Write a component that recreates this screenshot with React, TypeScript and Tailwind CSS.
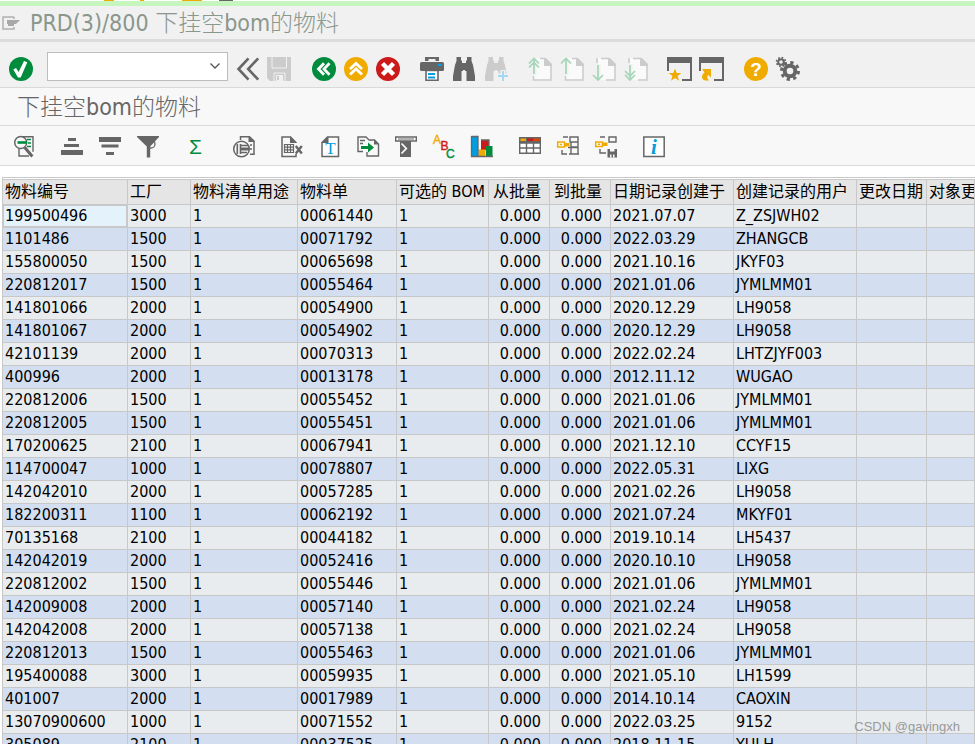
import type { ReactNode } from 'react';

type Row = [string, string, string, string, string];

// material, plant, BOM number, created on, created by
const rows: Row[] = [
    ['199500496', '3000', '00061440', '2021.07.07', 'Z_ZSJWH02'],
    ['1101486', '1500', '00071792', '2022.03.29', 'ZHANGCB'],
    ['155800050', '1500', '00065698', '2021.10.16', 'JKYF03'],
    ['220812017', '1500', '00055464', '2021.01.06', 'JYMLMM01'],
    ['141801066', '2000', '00054900', '2020.12.29', 'LH9058'],
    ['141801067', '2000', '00054902', '2020.12.29', 'LH9058'],
    ['42101139', '2000', '00070313', '2022.02.24', 'LHTZJYF003'],
    ['400996', '2000', '00013178', '2012.11.12', 'WUGAO'],
    ['220812006', '1500', '00055452', '2021.01.06', 'JYMLMM01'],
    ['220812005', '1500', '00055451', '2021.01.06', 'JYMLMM01'],
    ['170200625', '2100', '00067941', '2021.12.10', 'CCYF15'],
    ['114700047', '1000', '00078807', '2022.05.31', 'LIXG'],
    ['142042010', '2000', '00057285', '2021.02.26', 'LH9058'],
    ['182200311', '1100', '00062192', '2021.07.24', 'MKYF01'],
    ['70135168', '2100', '00044182', '2019.10.14', 'LH5437'],
    ['142042019', '2000', '00052416', '2020.10.10', 'LH9058'],
    ['220812002', '1500', '00055446', '2021.01.06', 'JYMLMM01'],
    ['142009008', '2000', '00057140', '2021.02.24', 'LH9058'],
    ['142042008', '2000', '00057138', '2021.02.24', 'LH9058'],
    ['220812013', '1500', '00055463', '2021.01.06', 'JYMLMM01'],
    ['195400088', '3000', '00059935', '2021.05.10', 'LH1599'],
    ['401007', '2000', '00017989', '2014.10.14', 'CAOXIN'],
    ['13070900600', '1000', '00071552', '2022.03.25', '9152'],
    ['305089', '2100', '00037525', '2018.11.15', 'YULH'],
];

const columns = [
    { label: '物料编号', width: 'w-[125px]' },
    { label: '工厂', width: 'w-[63px]' },
    { label: '物料清单用途', width: 'w-[107px]' },
    { label: '物料单', width: 'w-[99px]' },
    { label: '可选的 BOM', width: 'w-[92px]' },
    { label: '从批量', width: 'w-[61px]', numeric: true },
    { label: '到批量', width: 'w-[61px]', numeric: true },
    { label: '日期记录创建于', width: 'w-[123px]' },
    { label: '创建记录的用户', width: 'w-[123px]' },
    { label: '更改日期', width: 'w-[70px]' },
    { label: '对象更', width: '' },
];

const GRAY = '#666666';
const GREEN = '#008c3c';
const ORANGE = '#f0ab00';
const RED = '#cc1919';
const BLUE = '#009de0';
const PALE = '#cccccc';
const MINT = '#a5d6b8';

function Tool({ label, disabled, children }: { label: string; disabled?: boolean; children: ReactNode }) {
    return (
        <button type="button" aria-label={label} disabled={disabled} className="size-6 shrink-0">
            <svg viewBox="0 0 24 24" className="size-6 overflow-visible" fill="none">
                {children}
            </svg>
        </button>
    );
}

function Group({ children }: { children: ReactNode }) {
    return <div className="flex gap-2">{children}</div>;
}

function ListGroup({ children }: { children: ReactNode }) {
    return <div className="flex gap-[14px]">{children}</div>;
}

function Binoculars({ color }: { color: string }) {
    return (
        <path
            fill={color}
            d="M4.500 0H9v3.500h1V6h4V3.500h1V0h4.500v4l1.500 4 2 11v5h-8.500V14H13v-1h-2v1h-1.500v10H1v-5L3 8l1.500-4z"
        />
    );
}

// Sheet with a folded corner, used by the four paging buttons
function PageSheet({ down }: { down?: boolean }) {
    return (
        <>
            <path fill="#fafafa" d="M6 1h11l7 7v15H6z" />
            <path
                stroke={PALE}
                strokeWidth="1.600"
                d={down ? 'M9 1.500h8M23 8v15h-9M5 1v5' : 'M12 1.500h5M23 8v15H5.500v-4'}
            />
            <path fill={PALE} d="M16 1h2l6 6v2h-8z" />
        </>
    );
}

function MainToolbar() {
    return (
        <div className="flex h-[46px] shrink-0 items-center border-b border-[#d9d9d9] bg-[#f1f1f1] pl-[9px] pt-2">
            <div className="mb-2 flex w-full items-center pt-2">
                <Tool label="Enter">
                    <circle cx="12" cy="12" r="12" fill={GREEN} />
                    <path fill="#fff" d="M4.300 12.500 7 11l2.600 4L15 4l3.300 1.300L11.700 20.500H9z" />
                </Tool>
                <div className="relative -mt-1 ml-[14px] h-[29px] w-[181px] shrink-0">
                    <input
                        aria-label="Command"
                        className="size-full border border-[#bdbdbd] bg-white px-1 text-base outline-none"
                    />
                    <svg viewBox="0 0 10 6" className="absolute right-2 top-[11px] h-[6px] w-[10px]" fill="none">
                        <path stroke="#555" strokeWidth="1.300" d="M.5.5 5 5 9.500.5" />
                    </svg>
                </div>
                <div className="ml-2 flex gap-5">
                    <Group>
                        <Tool label="Collapse">
                            <path stroke={GRAY} strokeWidth="2.600" d="M12.500 1.300 2.500 12l10 10.700M22.200 1.300 12.200 12l10 10.700" />
                        </Tool>
                        <Tool label="Save" disabled>
                            <path fill={PALE} d="M-1 0h24v24H2l-3-3z" />
                            <path stroke="#f1f1f1" d="M4 0v11h14.500V0M6 24v-8h11v8" />
                            <path fill="#f1f1f1" d="M8 18h7v6H8z" />
                            <path fill={PALE} d="M9 19h2v4H9z" />
                        </Tool>
                    </Group>
                    <Group>
                        <Tool label="Back">
                            <circle cx="12" cy="12" r="12" fill={GREEN} />
                            <path stroke="#fff" strokeWidth="2.800" d="M12 6.200 6.500 12l5.500 5.800M17.500 6.200 12 12l5.500 5.800" />
                        </Tool>
                        <Tool label="Exit">
                            <circle cx="12" cy="12" r="12" fill={ORANGE} />
                            <path stroke="#fff" strokeWidth="2.800" d="M6 12l6-5.500 6 5.500M6 17.500 12 12l6 5.500" />
                        </Tool>
                        <Tool label="Cancel">
                            <circle cx="12" cy="12" r="12" fill={RED} />
                            <path stroke="#fff" strokeWidth="4.400" d="M6.500 6.500l11 11M17.500 6.500l-11 11" />
                        </Tool>
                    </Group>
                    <Group>
                        <Tool label="Print">
                            <path fill={GRAY} d="M5 0h14v4h-3.500V2h-7v2H5z" />
                            <rect y="5" width="24" height="9" rx="1.500" fill={GRAY} />
                            <rect x="18" y="7" width="4" height="2" fill={BLUE} />
                            <path fill="#fff" stroke={GRAY} strokeWidth="1.600" d="M6 13.500h12v9.700H6z" />
                            <path stroke={BLUE} strokeWidth="2" d="M8 17h7M8 20.500h7" />
                        </Tool>
                        <Tool label="Find">
                            <Binoculars color={GRAY} />
                        </Tool>
                        <Tool label="Find next" disabled>
                            <Binoculars color={PALE} />
                            <path fill="#f1f1f1" d="M12.500 16.500h4V13h5v3.500H25V25H12.500z" />
                            <path stroke="#a6d8f0" strokeWidth="2" d="M19 14v10M14 19h10" />
                        </Tool>
                    </Group>
                    <Group>
                        <Tool label="First page" disabled>
                            <PageSheet />
                            <path stroke="#f1f1f1" strokeWidth="5" d="M6 0v18" />
                            <path stroke={MINT} strokeWidth="1.700" d="M6 2v15M1 6.500l5-5 5 5M1 10.500l5-5 5 5" />
                        </Tool>
                        <Tool label="Previous page" disabled>
                            <PageSheet />
                            <path stroke="#f1f1f1" strokeWidth="5" d="M6 0v18" />
                            <path stroke={MINT} strokeWidth="1.700" d="M6 2v15M1 6.500l5-5 5 5" />
                        </Tool>
                        <Tool label="Next page" disabled>
                            <PageSheet down />
                            <path stroke="#f1f1f1" strokeWidth="5" d="M6 7v17" />
                            <path stroke={MINT} strokeWidth="1.700" d="M6 8v15M1 18l5 5 5-5" />
                        </Tool>
                        <Tool label="Last page" disabled>
                            <PageSheet down />
                            <path stroke="#f1f1f1" strokeWidth="5" d="M6 7v17" />
                            <path stroke={MINT} strokeWidth="1.700" d="M6 8v15M1 18l5 5 5-5M1 14l5 5 5-5" />
                        </Tool>
                    </Group>
                    <Group>
                        <Tool label="New session">
                            <path fill={GRAY} d="M-1 0h25v24H14v-2h8V6H1v8h-2z" />
                            <path fill={ORANGE} d="M7 11.500l1.700 4.500h4.600l-3.700 3 1.400 4.800-4-2.900-4 2.900 1.400-4.800-3.700-3h4.600z" />
                        </Tool>
                        <Tool label="Create shortcut">
                            <path fill={GRAY} d="M-1 0h25v24H14v-2h8V6H1v8h-2z" />
                            <path fill={ORANGE} d="M2 12h9v8.500L8.500 18c-2 1.500-1.500 3 .5 5.500-4 .5-7-.5-7-3.500 0-2 1-3 2.500-4.500z" />
                        </Tool>
                    </Group>
                    <Group>
                        <Tool label="Help">
                            <circle cx="12" cy="12" r="12" fill={ORANGE} />
                            <text x="12" y="18.500" textAnchor="middle" fill="#fff" className="font-['Liberation_Sans'] text-[19px] font-bold">?</text>
                        </Tool>
                        <Tool label="Customize">
                            <circle cx="14" cy="14" r="5.300" stroke={GRAY} strokeWidth="4" />
                            <circle cx="14" cy="14" r="8.500" stroke={GRAY} strokeWidth="3" strokeDasharray="3.3 3.376" />
                            <circle cx="5" cy="5" r="2.800" stroke={GRAY} strokeWidth="2" />
                            <circle cx="5" cy="5" r="4.400" stroke={GRAY} strokeWidth="1.800" strokeDasharray="1.7 1.756" />
                        </Tool>
                    </Group>
                </div>
            </div>
        </div>
    );
}

function ListToolbar() {
    return (
        <div className="flex h-10 shrink-0 gap-6 border-b border-[#d9d9d9] bg-[#f8f8f8] pl-3 pt-[9px]">
            <Tool label="Details">
                <path stroke={GRAY} strokeWidth="1.400" d="M9 1.700h12v15M7 13.500v7.500h10" />
                <path stroke={GREEN} strokeWidth="1.400" d="M15 4.500h4M16 8h3M15 11.500h4" />
                <circle cx="8.700" cy="7.500" r="6" fill="#f8f8f8" stroke={GRAY} strokeWidth="1.500" />
                <path stroke={GREEN} strokeWidth="2.600" d="M5.500 7.500H15" />
                <path stroke={GRAY} strokeWidth="3" d="M12.800 12.500l7.500 9" />
            </Tool>
            <ListGroup>
                <Tool label="Sort ascending">
                    <path fill={GRAY} d="M8 3h8v3H8zM4 9h15v3H4zM1 15h22v5H1z" />
                </Tool>
                <Tool label="Sort descending">
                    <path fill={GRAY} d="M1 2h22v5H1zM3.500 9.500h17v3h-17zM8 17h8v3H8z" />
                </Tool>
                <Tool label="Filter">
                    <path fill={GRAY} d="M1 1h22v1l-8.800 9.500v11h-3.400v-11L1 2z" />
                    <circle cx="15" cy="9" r="4" stroke={GRAY} strokeWidth="1.300" />
                </Tool>
            </ListGroup>
            <Tool label="Total">
                <text x="11.500" y="19" textAnchor="middle" fill={GREEN} className="font-['Liberation_Sans'] text-[21px]">Σ</text>
            </Tool>
            <Tool label="Print preview">
                <path stroke={GRAY} strokeWidth="1.500" d="M8.500 5V1.700h9L22 6v13.300h-4M18 10h2M18 14h2" />
                <path fill={GRAY} d="M16.500 1 22.500 7h-6z" />
                <circle cx="9.500" cy="14" r="7.800" fill="#f8f8f8" stroke={GRAY} strokeWidth="1.500" />
                <path stroke={GRAY} strokeWidth="1.600" d="M5.300 9v10M8.500 9v10M9 10.500h7M9 17.500h6" />
                <path fill={GRAY} d="M9 12.500h8v3H9z" />
            </Tool>
            <ListGroup>
                <Tool label="Spreadsheet">
                    <path stroke={GRAY} strokeWidth="1.500" d="M16 8v-.5L10.500 2H2v19.500h14V19" />
                    <path fill={GRAY} d="M10 1.300 16.700 8H10z" />
                    <path stroke={GRAY} strokeWidth="1.200" d="M4.500 9.500h9v8h-9zM4.500 12.200h9M4.500 14.900h9M7.500 9.500v8M10.500 9.500v8" />
                    <path stroke={GRAY} strokeWidth="2.400" d="M15.800 11l6 7.500M21.800 11l-6 7.500" />
                </Tool>
                <Tool label="Word processing">
                    <path fill="#fff" stroke={GRAY} strokeWidth="1.500" d="M9.500 2h11v19.500H4V7.500z" />
                    <path fill={GRAY} d="M10.500 1.300V8H3.300z" />
                    <text x="12.500" y="19" textAnchor="middle" fill={BLUE} className="font-['Liberation_Serif'] text-[17px]">T</text>
                </Tool>
                <Tool label="Local file">
                    <path stroke={GRAY} strokeWidth="1.400" d="M12.500 5V4.500L10 2H2v14.500h5M4 5.500h5M4 8.500h3" />
                    <path stroke={GRAY} strokeWidth="1.400" d="M12.500 5h6l4 4v12H11v-4" />
                    <path fill={GRAY} d="M18 4.500 23 9.500h-5z" />
                    <path fill={GREEN} d="M5 11h7V7.500l6 5-6 5V14H5z" />
                </Tool>
                <Tool label="Mail recipient">
                    <path fill="#fff" stroke={GRAY} strokeWidth="1.400" d="M1.700 2h20.600v4H1.700z" />
                    <path stroke={GRAY} d="M4 4h16" />
                    <path fill={GRAY} d="M6 6h11v16H6z" />
                    <path stroke="#fff" strokeWidth="1.700" d="M7.500 8.500l4.800 5-4.800 5" />
                </Tool>
                <Tool label="ABC analysis">
                    <g className="font-['Liberation_Sans'] text-[12px]" strokeWidth="0.400">
                        <text x="1" y="9" fill={ORANGE} stroke={ORANGE}>A</text>
                        <text x="8.500" y="14.500" fill={RED} stroke={RED}>B</text>
                        <text x="14" y="22.500" fill={GREEN} stroke={GREEN}>C</text>
                    </g>
                </Tool>
                <Tool label="Graphic">
                    <path fill={BLUE} d="M2 2h6v19H2z" />
                    <path fill={RED} d="M11 5h8v10h-8z" />
                    <path fill={ORANGE} d="M8.500 14.500h7V21h-7z" />
                    <path fill={GREEN} d="M16 11h6.500v10H16z" />
                    <path stroke={GRAY} strokeWidth="1.300" d="M1.500 1.500H8V21M1.500 1v20.500h21.500M11 5h8v6" />
                </Tool>
            </ListGroup>
            <ListGroup>
                <Tool label="Change layout">
                    <path fill={GRAY} d="M1 2h22v6H1z" />
                    <path fill={ORANGE} d="M2.500 3.500H8V6H2.500z" />
                    <path fill={RED} d="M9 3.500h6V6H9z" />
                    <path fill="#dd4400" d="M16 3.500h5.500V6H16z" />
                    <path fill="#fff" stroke={GRAY} strokeWidth="1.400" d="M1.700 8h20.600v10.300H1.700zM1.700 13h20.600M8.500 8v10.300M15.500 8v10.300" />
                </Tool>
                <Tool label="Select layout">
                    <path stroke={GRAY} strokeWidth="1.400" d="M7 2h5M14 2h8v5h-8zM15 12h7M22 7v12M15 7v12M13 19h10M6 15v4h5M12 12.500h10" />
                    <path stroke={ORANGE} strokeWidth="1.500" d="M1.700 7h6.800v5H1.700zM4 9.500h2" />
                    <path fill={ORANGE} d="M8.500 8h5v3.500h-5z" />
                </Tool>
                <Tool label="Save layout">
                    <path stroke={GRAY} strokeWidth="1.400" d="M6 2h5M15 2h7v5h-7zM6 14v4h6" />
                    <path stroke={ORANGE} strokeWidth="1.500" d="M1.700 7h6.800v4.500H1.700zM4 9.200h2" />
                    <path fill={ORANGE} d="M8.500 7.500h5V11h-5z" />
                    <path fill={GRAY} d="M13.500 14h9.500v8.500h-9.500z" />
                    <path fill="#f8f8f8" d="M16 14h4.500v2.500H16zM16 19.500h1.500v3H16zM19 19.500h1.500v3H19z" />
                </Tool>
            </ListGroup>
            <Tool label="Information">
                <path fill="#fff" stroke={GRAY} strokeWidth="1.500" d="M1.800 2h20.400v19.500H1.800z" />
                <text x="12" y="18.500" textAnchor="middle" fill={BLUE} className="font-['Liberation_Serif'] text-[21px] font-bold italic">i</text>
            </Tool>
        </div>
    );
}

const cell = 'overflow-hidden border-b border-r border-[#c8c8c8] whitespace-nowrap';
const textCell = `${cell} px-[2px] text-left`;
const numberCell = `${cell} pl-[2px] pr-2 text-right`;

export default function App() {
    return (
        <div className="relative flex h-screen flex-col overflow-hidden bg-white font-['DejaVu_Sans_Condensed','Noto_Sans','Noto_Sans_CJK_SC',sans-serif] text-black">
            {/* Edge of the window behind */}
            <div className="flex h-px shrink-0 pl-[104px]">
                <span className="w-[10px] bg-[#f0ab00]" />
                <span className="ml-[26px] w-1 bg-[#f0ab00]" />
                <span className="ml-[38px] w-5 bg-[#f0ab00]" />
                <span className="ml-[17px] w-[14px] bg-[#666]" />
            </div>
            <div className="h-[5px] shrink-0 bg-[#c6f5bd]" />

            <header className="flex h-9 shrink-0 items-center border-b-[3px] border-[#dcdcdc] bg-[#f1f1f1] pl-[2px]">
                <svg viewBox="0 0 18 14" className="h-[14px] w-[18px]" fill="none">
                    <path stroke="#b0b0b0" strokeWidth="1.500" d="M12 1H1v12h11v-2M12 1v2" />
                    <path fill="#a8a8a8" d="M5 4h13l-4 4h-2v2H6V8H5z" />
                </svg>
                <h1 className="ml-[10px] text-[23px] font-light leading-8 text-[#89978d]">PRD(3)/800 下挂空bom的物料</h1>
            </header>

            <MainToolbar />

            <div className="flex h-[38px] shrink-0 items-center border-b border-[#d9d9d9] bg-[#f8f8f8] pl-[17px]">
                <h2 className="text-[23px] font-light leading-8 text-[#666]">下挂空bom的物料</h2>
            </div>

            <ListToolbar />

            <main className="ml-[2px] mt-[11px] border-l border-t border-[#c8c8c8] pt-px">
                <table className="w-full table-fixed border-separate border-spacing-0 border-t border-[#c8c8c8] text-base leading-[22px]">
                    <colgroup>
                        {columns.map((c) => (
                            <col key={c.label} className={c.width} />
                        ))}
                    </colgroup>
                    <thead>
                        <tr className="h-[25px] bg-[#e5e5e5]">
                            {columns.map((c) => (
                                <th key={c.label} className={`${c.numeric ? numberCell : textCell} h-[25px] font-normal`}>
                                    {c.label}
                                </th>
                            ))}
                        </tr>
                    </thead>
                    <tbody>
                        {rows.map(([material, plant, bom, date, user], i) => (
                            <tr key={bom} className={i % 2 ? 'bg-[#d3dff0]' : 'bg-[#e8ecef]'}>
                                <td className={`${textCell} ${i === 0 ? 'bg-[#e4f2fb] inset-ring inset-ring-[#c8c8c8]' : ''}`}>
                                    {material}
                                </td>
                                <td className={textCell}>{plant}</td>
                                <td className={textCell}>1</td>
                                <td className={textCell}>{bom}</td>
                                <td className={textCell}>1</td>
                                <td className={numberCell}>0.000</td>
                                <td className={numberCell}>0.000</td>
                                <td className={textCell}>{date}</td>
                                <td className={textCell}>{user}</td>
                                <td className={textCell} />
                                <td className={textCell} />
                            </tr>
                        ))}
                    </tbody>
                </table>
            </main>

            <div className="absolute bottom-[7px] right-[15px] font-['Liberation_Sans'] text-[13px] leading-5 text-[#999]">
                CSDN @gavingxh
            </div>
        </div>
    );
}
